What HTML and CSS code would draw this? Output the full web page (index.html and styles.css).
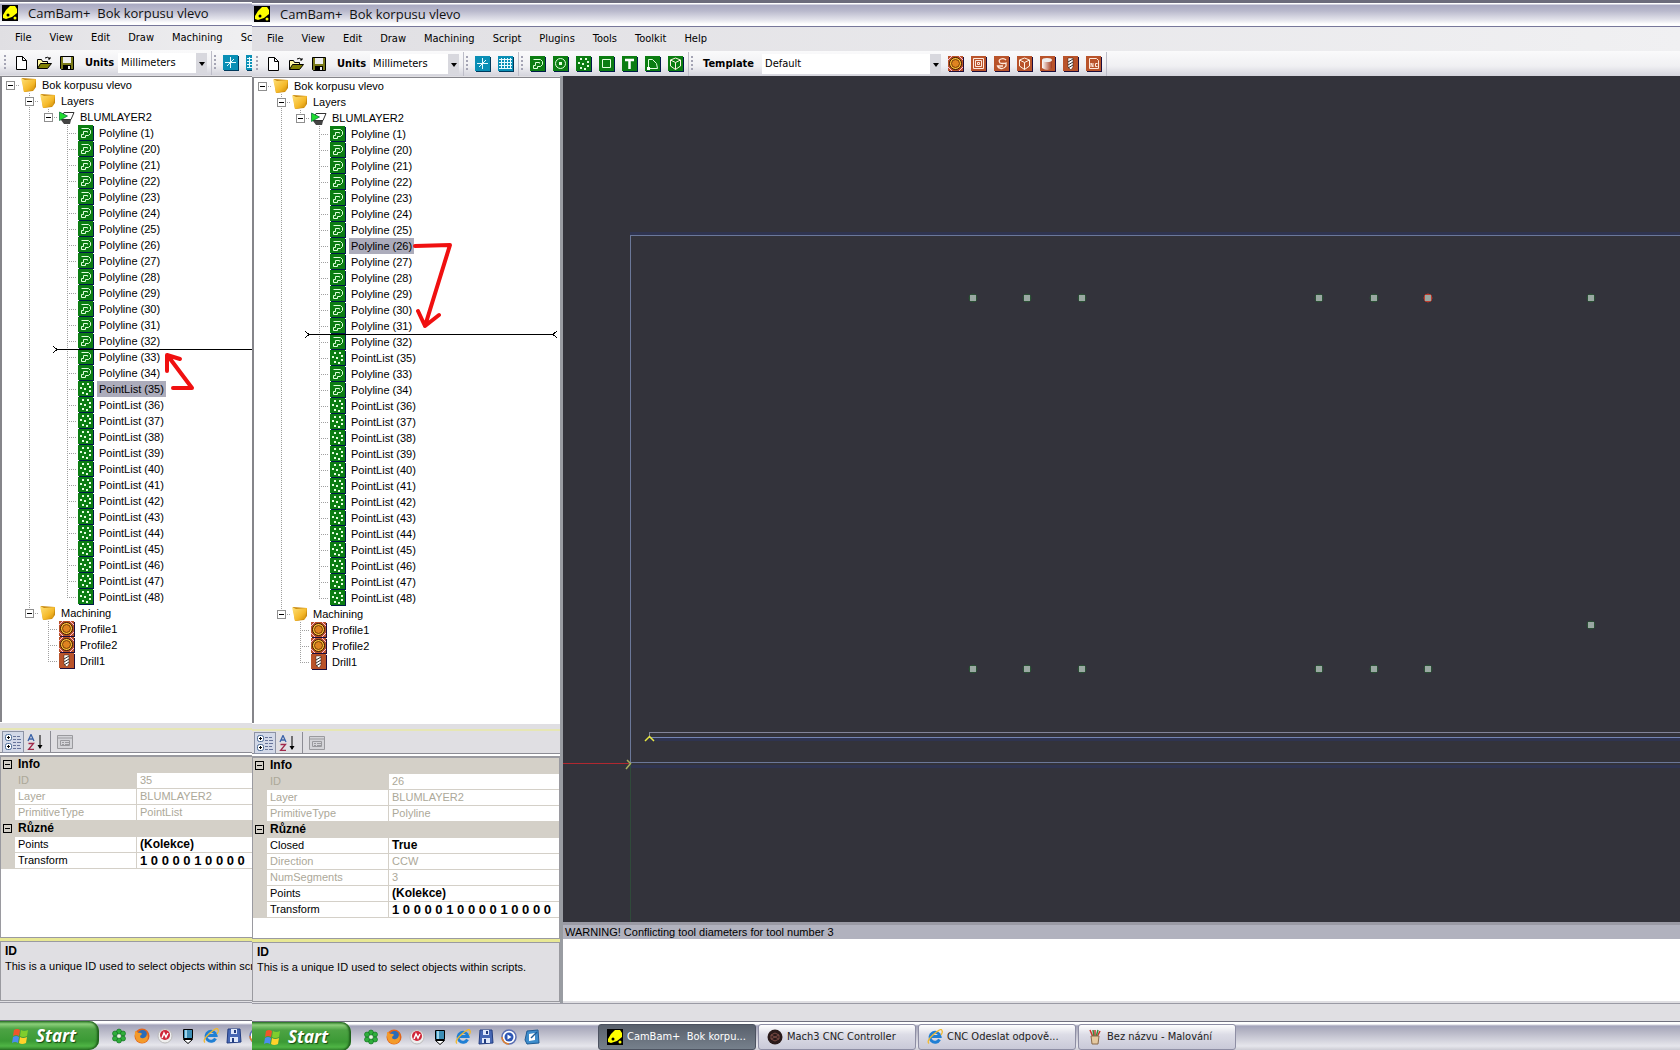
FILE: index.html
```html
<!DOCTYPE html>
<html lang="cs">
<head>
<meta charset="utf-8">
<title>CamBam+ Bok korpusu vlevo</title>
<link rel="stylesheet" href="styles.css">
</head>
<body>
<svg class="defs" aria-hidden="true">
  <defs>
    <linearGradient id="gold" x1="0" y1="0" x2="1" y2="1"><stop offset="0" stop-color="#ffe27a"/><stop offset=".6" stop-color="#f5b92a"/><stop offset="1" stop-color="#c98500"/></linearGradient>
    <linearGradient id="steel"><stop offset="0" stop-color="#fff"/><stop offset="1" stop-color="#a33a1a"/></linearGradient>
  </defs>
  <symbol id="app" viewBox="0 0 16 16"><path fill="#000" d="M0 0h16v16H0z"/><path fill="#ff0" d="M8 1h5l2 3v4l-5 4-6 2-3-1v-3l3-5z"/><circle cx="6" cy="10" r="1.5"/><circle cx="13" cy="13" r="1.5" fill="#ff0"/></symbol>
  <symbol id="folder" viewBox="0 0 16 16"><path fill="#c98a10" d="M1 1l14 1v8l-3 4-9 1z"/><path fill="url(#gold)" d="M0 1l4 2 11-1-2 11-10 2z"/></symbol>
  <symbol id="layer" viewBox="0 0 16 16"><path d="M5 3.500h10l-3 7H2z" fill="#fff" stroke="#333"/><path d="M2 11h10l-1 4H5z" fill="#444"/><path d="M.5 3l8 4-8 4.500z" fill="#1fdc2f" stroke="#063" stroke-width=".7"/></symbol>
  <symbol id="green" viewBox="0 0 16 16"><path fill="#001a4a" d="M1 1h15v15H1z"/><path fill="#0b7d12" d="M0 0h15v15H0z"/></symbol>
  <symbol id="brown" viewBox="0 0 16 16"><path fill="#1c0d3c" d="M1 1h15v15H1z"/><path fill="#b9532a" d="M0 0h15v15H0z"/></symbol>
  <symbol id="poly" viewBox="0 0 16 16"><use href="#green"/><path d="M3.500 3.500h7l2 2v3l-2 2h-3v2h-4v-3h2v-3h4v1" fill="none" stroke="#dfffdc"/></symbol>
  <symbol id="points" viewBox="0 0 16 16"><use href="#green"/><path fill="#e4ffe0" d="M4 2h2v2H4zM9 2h2v2H9zM2 6h2v2H2zM6 7h2v2H6zM11 5h2v2h-2zM11 9h2v2h-2zM4 11h2v2H4zM8 12h2v2H8z"/></symbol>
  <symbol id="circle" viewBox="0 0 16 16"><use href="#green"/><circle cx="7.500" cy="7.500" r="5" fill="none" stroke="#e4ffe0"/><path fill="#e4ffe0" d="M6 6h3v3H6z"/></symbol>
  <symbol id="rect" viewBox="0 0 16 16"><use href="#green"/><path d="M3.500 3.500h8v8h-8z" fill="none" stroke="#e4ffe0"/></symbol>
  <symbol id="text" viewBox="0 0 16 16"><use href="#green"/><path d="M3 4h9M7.500 4v9" stroke="#fff" stroke-width="2.500"/></symbol>
  <symbol id="surface" viewBox="0 0 16 16"><use href="#green"/><path d="M3.500 12.500v-9h4l4 4 1 5z" fill="none" stroke="#e4ffe0"/><path fill="#fff" d="M2 11h3v3H2z"/></symbol>
  <symbol id="cube" viewBox="0 0 16 16"><path d="M7.500 2l5 2v6l-5 3.500-5-3.500V4zM2.500 4l5 2.500 5-2.500M7.500 6.500v7" fill="none" stroke="#fff3e4"/></symbol>
  <symbol id="solid" viewBox="0 0 16 16"><use href="#green"/><use href="#cube"/></symbol>
  <symbol id="profile" viewBox="0 0 16 16"><use href="#brown"/><path d="M0 4l4-4M11 0l4 4M0 11l4 4M11 15l4-4" stroke="#fbd"/><circle cx="7.500" cy="7.500" r="6" fill="#ffc53a" stroke="#3a1500"/><circle cx="7.500" cy="7.500" r="4" fill="#de8420" stroke="#5a2800" stroke-width=".8"/></symbol>
  <symbol id="pocket" viewBox="0 0 16 16"><use href="#brown"/><path d="M2.500 2.500h10v10h-10zM4.500 4.500h6v6h-6zM6.500 6.500h2v2h-2z" fill="none" stroke="#ffe9dc"/></symbol>
  <symbol id="engrave" viewBox="0 0 16 16"><use href="#brown"/><path d="M12 4Q10 2 7 3T6 7q3 1 6 0v3q-2 3-5 2.500T3.500 10H9" fill="none" stroke="#ffe9dc" stroke-width="1.300"/></symbol>
  <symbol id="relief" viewBox="0 0 16 16"><use href="#brown"/><use href="#cube"/></symbol>
  <symbol id="lathe" viewBox="0 0 16 16"><use href="#brown"/><path d="M2 4v8q6 4 10 0V4z" fill="url(#steel)"/><ellipse cx="7" cy="4" rx="5" ry="2" fill="#eee"/></symbol>
  <symbol id="drill" viewBox="0 0 16 16"><use href="#brown"/><path d="M5 2h5v9l-2 3-3-3z" fill="#fff" stroke="#401500" stroke-width=".5"/><path d="M5 6l5-3M5 9l5-3M5 12l5-3" stroke="#333"/></symbol>
  <symbol id="ncfile" viewBox="0 0 16 16"><use href="#brown"/><path d="M3.500 2.500h7l2 2v8h-9zM5 11V7l2 4V7M11.500 7.500h-2v3h2" fill="none" stroke="#ffe9dc"/></symbol>
  <symbol id="new" viewBox="0 0 16 16"><path d="M3.500 1.500h6l4 4v9h-10zM9.500 1.500v4h4" fill="#fff" stroke="#000"/></symbol>
  <symbol id="open" viewBox="0 0 16 16"><path d="M1.500 13.500v-9h4l1 2h5v3" fill="#fff7a0" stroke="#000"/><path d="M1.500 13.500l3-5h11l-4 5z" fill="#808000" stroke="#000"/><path d="M9 3q3-2 5 1V2M14 4h-2" fill="none" stroke="#000"/></symbol>
  <symbol id="save" viewBox="0 0 16 16"><path d="M1.500 1.500h13v13h-12l-1-1z" fill="#7a7a18" stroke="#000"/><path fill="#eee" d="M4 2h8v6H4z"/><path d="M4 10h8v4H4z"/><path fill="#eee" d="M9 11h2v3H9z"/></symbol>
  <symbol id="axes" viewBox="0 0 16 16"><path fill="#003a5c" d="M1 1h15v15H1z"/><path fill="#0a8fb5" d="M0 0h15v15H0z"/><path d="M7.500 2v11M2 7.500h11M4 11l7-7" stroke="#e8fbff"/></symbol>
  <symbol id="grid" viewBox="0 0 16 16"><path fill="#003a5c" d="M1 1h15v15H1z"/><path fill="#0a8fb5" d="M0 0h15v15H0z"/><path d="M3.500 2v11M6.500 2v11M9.500 2v11M12.500 2v11M1 3.500h13M1 6.500h13M1 9.500h13M1 12.500h13" stroke="#e8fbff"/></symbol>
  <symbol id="categories" viewBox="0 0 16 16"><rect x=".5" y=".5" width="6" height="6" rx="2" fill="#fff" stroke="#4a6a95"/><rect x=".5" y="9.500" width="6" height="6" rx="2" fill="#fff" stroke="#4a6a95"/><path d="M2 3.500h3M3.500 2v3M2 12.500h3M3.500 11v3" stroke="#000"/><path d="M8 2.500h3M8 5.500h3M8 8.500h3M8 11.500h3M8 14.500h3M12 2.500h3M12 5.500h4M12 8.500h4M12 11.500h3M12 14.500h4" stroke="#67749a"/></symbol>
  <symbol id="sort" viewBox="0 0 16 16"><path d="M1 7l3-6.500L7 7M2 5h4" fill="none" stroke="#3b62a8" stroke-width="1.300"/><path d="M1.500 9.500h5l-5 6h5.500" fill="none" stroke="#a0284a" stroke-width="1.300"/><path d="M13 1v13" stroke="#000"/><path d="M10.500 11h5L13 15z"/></symbol>
  <symbol id="pages" viewBox="0 0 16 16"><path d="M.5 1.500h15v13H.5zM.5 4h15" fill="#d4d4d8" stroke="#9a9a9e"/><path d="M3.500 6.500h9v5h-9zM5 8.500h2M8 8.500h4M5 10.500h2M8 10.500h4" fill="none" stroke="#9a9a9e"/></symbol>
  <symbol id="flag" viewBox="0 0 18 18"><path fill="#f0562a" d="M3 3q3-2 6 0L8 9Q5 7 2 9z"/><path fill="#7fce2d" d="M10 3q3 2 7 0l-1 6q-4 2-7 0z"/><path fill="#4a8df0" d="M2 10q3-2 6 0l-1 6q-3-2-6 0z"/><path fill="#ffd22a" d="M9 10q3 2 7 0l-1 6q-4 2-7 0z"/></symbol>
  <symbol id="clover" viewBox="0 0 16 16"><g fill="#2fae3c" stroke="#0a6a1a" stroke-width=".6"><circle cx="8" cy="3.500" r="2.500"/><circle cx="12" cy="5.500" r="2.500"/><circle cx="12" cy="10.500" r="2.500"/><circle cx="8" cy="12.500" r="2.500"/><circle cx="4" cy="10.500" r="2.500"/><circle cx="4" cy="5.500" r="2.500"/></g><circle cx="8" cy="8" r="1.500" fill="#e8ffd8"/></symbol>
  <symbol id="firefox" viewBox="0 0 16 16"><circle cx="8" cy="8" r="7.500" fill="#e2641a"/><circle cx="8.500" cy="6.500" r="4.500" fill="#2b6cb8"/><path fill="#f39a2a" d="M1 3q2 0 3 2 3-1 4 1l-2 2q0 3 4 2 3-1 3-5 3 8-4 10Q0 15 1 3z"/></symbol>
  <symbol id="nero" viewBox="0 0 16 16"><circle cx="8" cy="8" r="7" fill="#eee" stroke="#bbb"/><circle cx="8" cy="7" r="5" fill="#cf2638"/><path d="M5 10l2-5 2 4 2-4" fill="none" stroke="#fff" stroke-width="1.500"/></symbol>
  <symbol id="pen" viewBox="0 0 16 16"><path d="M3.500 1.500h9v9h-9z" fill="#3c8db5" stroke="#000"/><path fill="#9fd4ea" d="M5 2h2v8H5z"/><path d="M3.500 11.500h9l-4.500 4z" fill="#fff" stroke="#000"/></symbol>
  <symbol id="ie" viewBox="0 0 16 16"><path d="M12.500 10.500a5 5 0 1 1 .5-3H4" fill="none" stroke="#1f7fd4" stroke-width="3"/><path d="M2 14.500Q-1 12 7 5t8-3q1 1-1 4" fill="none" stroke="#f2b92c" stroke-width="1.300"/></symbol>
  <symbol id="disk" viewBox="0 0 16 16"><path d="M2 1h12l1 13-14 1z" fill="#4667b4" stroke="#223c80"/><path fill="#dfe8fa" d="M5 1h6v5H5zM4 9h8v5H4z"/><path fill="#223c80" d="M8 2h2v3H8zM6 10h2v4H6z"/></symbol>
  <symbol id="media" viewBox="0 0 16 16"><circle cx="8" cy="8" r="7" fill="#fff" stroke="#5b6fb2" stroke-width="1.500"/><path d="M1 8a7 7 0 0 0 7 7" fill="none" stroke="#e08030" stroke-width="1.500"/><circle cx="8" cy="8" r="4.500" fill="#2d56b4"/><path fill="#fff" d="M6.500 5.500l4 2.500-4 2.500z"/></symbol>
  <symbol id="desk" viewBox="0 0 16 16"><path d="M3 2l11-1 1 13-12 1-2-4z" fill="#3d8ccb" stroke="#1d5a94"/><path d="M5 5l6-1v7l-6 1z" fill="#fff"/><path d="M7 9l6-6" stroke="#1d5a94" stroke-width="1.500"/></symbol>
  <symbol id="mach" viewBox="0 0 16 16"><circle cx="8" cy="8" r="7.500" fill="#2a1a1a"/><path d="M4 6l4-2 4 2v4l-4 2-4-2zM4 6l8 4M12 6l-8 4" fill="none" stroke="#7a4a44"/></symbol>
  <symbol id="paint" viewBox="0 0 16 16"><path d="M3 1l3 7M8 1v7M13 2l-3 6" stroke="#c8372b" stroke-width="1.500"/><path d="M6 1l1 7M11 1l-2 7" stroke="#3c8a3a" stroke-width="1.500"/><path d="M4 7h8l-1 8H5z" fill="#e5c9a0" stroke="#8a6a4a"/></symbol>
</svg>

<section class="screen">
  <header class="titlebar"><svg class="icon"><use href="#app"/></svg><h1>CamBam+  Bok korpusu vlevo</h1></header>
  <nav class="menu"><button>File</button><button>View</button><button>Edit</button><button>Draw</button><button>Machining</button><button>Script</button></nav>
  <div class="toolbar">
    <i class="grip"></i>
    <button aria-label="New"><svg class="icon"><use href="#new"/></svg></button>
    <button aria-label="Open"><svg class="icon"><use href="#open"/></svg></button>
    <button aria-label="Save"><svg class="icon"><use href="#save"/></svg></button>
    <label for="units-a">Units</label>
    <span class="combo units"><select id="units-a"><option>Millimeters</option></select></span>
    <i class="sep"></i><i class="grip"></i>
    <button aria-label="Axes"><svg class="icon"><use href="#axes"/></svg></button>
    <button aria-label="Grid"><svg class="icon"><use href="#grid"/></svg></button>
  </div>
  <main class="workspace">
    <aside class="side">
      <div class="tree">
        <ul>
          <li><div class="row"><span class="twig"><button aria-label="Collapse"></button></span><svg class="icon"><use href="#folder"/></svg><span class="name">Bok korpusu vlevo</span></div>
            <ul>
              <li><div class="row"><span class="twig"><button aria-label="Collapse"></button></span><svg class="icon"><use href="#folder"/></svg><span class="name">Layers</span></div>
                <ul>
                  <li><div class="row"><span class="twig"><button aria-label="Collapse"></button></span><svg class="icon"><use href="#layer"/></svg><span class="name">BLUMLAYER2</span></div>
                    <ul>
                      <li class="row"><span class="twig"></span><svg class="icon"><use href="#poly"/></svg><span class="name">Polyline (1)</span></li>
                      <li class="row"><span class="twig"></span><svg class="icon"><use href="#poly"/></svg><span class="name">Polyline (20)</span></li>
                      <li class="row"><span class="twig"></span><svg class="icon"><use href="#poly"/></svg><span class="name">Polyline (21)</span></li>
                      <li class="row"><span class="twig"></span><svg class="icon"><use href="#poly"/></svg><span class="name">Polyline (22)</span></li>
                      <li class="row"><span class="twig"></span><svg class="icon"><use href="#poly"/></svg><span class="name">Polyline (23)</span></li>
                      <li class="row"><span class="twig"></span><svg class="icon"><use href="#poly"/></svg><span class="name">Polyline (24)</span></li>
                      <li class="row"><span class="twig"></span><svg class="icon"><use href="#poly"/></svg><span class="name">Polyline (25)</span></li>
                      <li class="row"><span class="twig"></span><svg class="icon"><use href="#poly"/></svg><span class="name">Polyline (26)</span></li>
                      <li class="row"><span class="twig"></span><svg class="icon"><use href="#poly"/></svg><span class="name">Polyline (27)</span></li>
                      <li class="row"><span class="twig"></span><svg class="icon"><use href="#poly"/></svg><span class="name">Polyline (28)</span></li>
                      <li class="row"><span class="twig"></span><svg class="icon"><use href="#poly"/></svg><span class="name">Polyline (29)</span></li>
                      <li class="row"><span class="twig"></span><svg class="icon"><use href="#poly"/></svg><span class="name">Polyline (30)</span></li>
                      <li class="row"><span class="twig"></span><svg class="icon"><use href="#poly"/></svg><span class="name">Polyline (31)</span></li>
                      <li class="row"><span class="twig"></span><svg class="icon"><use href="#poly"/></svg><span class="name">Polyline (32)</span></li>
                      <li class="row"><span class="twig"></span><svg class="icon"><use href="#poly"/></svg><span class="name">Polyline (33)</span></li>
                      <li class="row"><span class="twig"></span><svg class="icon"><use href="#poly"/></svg><span class="name">Polyline (34)</span></li>
                      <li class="row"><span class="twig"></span><svg class="icon"><use href="#points"/></svg><span class="name selected">PointList (35)</span></li>
                      <li class="row"><span class="twig"></span><svg class="icon"><use href="#points"/></svg><span class="name">PointList (36)</span></li>
                      <li class="row"><span class="twig"></span><svg class="icon"><use href="#points"/></svg><span class="name">PointList (37)</span></li>
                      <li class="row"><span class="twig"></span><svg class="icon"><use href="#points"/></svg><span class="name">PointList (38)</span></li>
                      <li class="row"><span class="twig"></span><svg class="icon"><use href="#points"/></svg><span class="name">PointList (39)</span></li>
                      <li class="row"><span class="twig"></span><svg class="icon"><use href="#points"/></svg><span class="name">PointList (40)</span></li>
                      <li class="row"><span class="twig"></span><svg class="icon"><use href="#points"/></svg><span class="name">PointList (41)</span></li>
                      <li class="row"><span class="twig"></span><svg class="icon"><use href="#points"/></svg><span class="name">PointList (42)</span></li>
                      <li class="row"><span class="twig"></span><svg class="icon"><use href="#points"/></svg><span class="name">PointList (43)</span></li>
                      <li class="row"><span class="twig"></span><svg class="icon"><use href="#points"/></svg><span class="name">PointList (44)</span></li>
                      <li class="row"><span class="twig"></span><svg class="icon"><use href="#points"/></svg><span class="name">PointList (45)</span></li>
                      <li class="row"><span class="twig"></span><svg class="icon"><use href="#points"/></svg><span class="name">PointList (46)</span></li>
                      <li class="row"><span class="twig"></span><svg class="icon"><use href="#points"/></svg><span class="name">PointList (47)</span></li>
                      <li class="row"><span class="twig"></span><svg class="icon"><use href="#points"/></svg><span class="name">PointList (48)</span></li>
                    </ul>
                  </li>
                </ul>
              </li>
              <li><div class="row"><span class="twig"><button aria-label="Collapse"></button></span><svg class="icon"><use href="#folder"/></svg><span class="name">Machining</span></div>
                <ul>
                  <li class="row"><span class="twig"></span><svg class="icon"><use href="#profile"/></svg><span class="name">Profile1</span></li>
                  <li class="row"><span class="twig"></span><svg class="icon"><use href="#profile"/></svg><span class="name">Profile2</span></li>
                  <li class="row"><span class="twig"></span><svg class="icon"><use href="#drill"/></svg><span class="name">Drill1</span></li>
                </ul>
              </li>
            </ul>
          </li>
        </ul>
        <svg class="marks"><path class="drop" d="M51 269l4 3.500-4 3.500M55 272.500h244l4-3.500M299 272.500l4 3.500"/><path class="pen" d="M171 311h19l-24-32M165 294v-16l13 4"/></svg>
      </div>
      <div class="splitter"></div>
      <div class="propbar"><button class="on" aria-label="Categorized"><svg class="icon"><use href="#categories"/></svg></button><button aria-label="Alphabetical"><svg class="icon"><use href="#sort"/></svg></button><i class="sep"></i><button aria-label="Property pages"><svg class="icon"><use href="#pages"/></svg></button></div>
      <div class="props">
        <table>
          <colgroup><col class="c-gutter"><col class="c-key"><col></colgroup>
          <tr class="cat"><td><button aria-label="Collapse"></button></td><th colspan="2">Info</th></tr>
          <tr class="ro current"><td></td><td>ID</td><td>35</td></tr>
          <tr class="ro"><td></td><td>Layer</td><td>BLUMLAYER2</td></tr>
          <tr class="ro"><td></td><td>PrimitiveType</td><td>PointList</td></tr>
          <tr class="cat"><td><button aria-label="Collapse"></button></td><th colspan="2">Různé</th></tr>
          <tr><td></td><td>Points</td><td class="strong">(Kolekce)</td></tr>
          <tr><td></td><td>Transform</td><td class="matrix">1 0 0 0 0 1 0 0 0 0</td></tr>
        </table>
      </div>
      <div class="splitter thin"></div>
      <div class="help"><h2>ID</h2><p>This is a unique ID used to select objects within scripts.</p></div>
    </aside>
  </main>
  <div class="status"></div>
  <footer class="taskbar">
    <button class="start"><svg class="flag"><use href="#flag"/></svg>Start</button>
    <div class="quick">
      <button aria-label="ICQ"><svg class="icon"><use href="#clover"/></svg></button>
      <button aria-label="Firefox"><svg class="icon"><use href="#firefox"/></svg></button>
      <button aria-label="Nero"><svg class="icon"><use href="#nero"/></svg></button>
      <button aria-label="Pen"><svg class="icon"><use href="#pen"/></svg></button>
      <button aria-label="Internet Explorer"><svg class="icon"><use href="#ie"/></svg></button>
      <button aria-label="Commander"><svg class="icon"><use href="#disk"/></svg></button>
      <button aria-label="Media Player"><svg class="icon"><use href="#media"/></svg></button>
    </div>
  </footer>
</section>

<section class="screen front">
  <header class="titlebar"><svg class="icon"><use href="#app"/></svg><h1>CamBam+  Bok korpusu vlevo</h1></header>
  <nav class="menu"><button>File</button><button>View</button><button>Edit</button><button>Draw</button><button>Machining</button><button>Script</button><button>Plugins</button><button>Tools</button><button>Toolkit</button><button>Help</button></nav>
  <div class="toolbar">
    <i class="grip"></i>
    <button aria-label="New"><svg class="icon"><use href="#new"/></svg></button>
    <button aria-label="Open"><svg class="icon"><use href="#open"/></svg></button>
    <button aria-label="Save"><svg class="icon"><use href="#save"/></svg></button>
    <label for="units-b">Units</label>
    <span class="combo units"><select id="units-b"><option>Millimeters</option></select></span>
    <i class="sep"></i><i class="grip"></i>
    <button aria-label="Axes"><svg class="icon"><use href="#axes"/></svg></button>
    <button aria-label="Grid"><svg class="icon"><use href="#grid"/></svg></button>
    <i class="sep"></i><i class="grip"></i>
    <button aria-label="Polyline"><svg class="icon"><use href="#poly"/></svg></button>
    <button aria-label="Circle"><svg class="icon"><use href="#circle"/></svg></button>
    <button aria-label="Point list"><svg class="icon"><use href="#points"/></svg></button>
    <button aria-label="Rectangle"><svg class="icon"><use href="#rect"/></svg></button>
    <button aria-label="Text"><svg class="icon"><use href="#text"/></svg></button>
    <button aria-label="Surface"><svg class="icon"><use href="#surface"/></svg></button>
    <button aria-label="Solid"><svg class="icon"><use href="#solid"/></svg></button>
    <i class="sep"></i><i class="grip"></i>
    <label for="template">Template</label>
    <span class="combo template"><select id="template"><option>Default</option></select></span>
    <button aria-label="Profile"><svg class="icon"><use href="#profile"/></svg></button>
    <button aria-label="Pocket"><svg class="icon"><use href="#pocket"/></svg></button>
    <button aria-label="Engrave"><svg class="icon"><use href="#engrave"/></svg></button>
    <button aria-label="3D surface"><svg class="icon"><use href="#relief"/></svg></button>
    <button aria-label="Lathe"><svg class="icon"><use href="#lathe"/></svg></button>
    <button aria-label="Drill"><svg class="icon"><use href="#drill"/></svg></button>
    <button aria-label="NC file"><svg class="icon"><use href="#ncfile"/></svg></button>
    <i class="sep"></i>
  </div>
  <main class="workspace">
    <aside class="side">
      <div class="tree">
        <ul>
          <li><div class="row"><span class="twig"><button aria-label="Collapse"></button></span><svg class="icon"><use href="#folder"/></svg><span class="name">Bok korpusu vlevo</span></div>
            <ul>
              <li><div class="row"><span class="twig"><button aria-label="Collapse"></button></span><svg class="icon"><use href="#folder"/></svg><span class="name">Layers</span></div>
                <ul>
                  <li><div class="row"><span class="twig"><button aria-label="Collapse"></button></span><svg class="icon"><use href="#layer"/></svg><span class="name">BLUMLAYER2</span></div>
                    <ul>
                      <li class="row"><span class="twig"></span><svg class="icon"><use href="#poly"/></svg><span class="name">Polyline (1)</span></li>
                      <li class="row"><span class="twig"></span><svg class="icon"><use href="#poly"/></svg><span class="name">Polyline (20)</span></li>
                      <li class="row"><span class="twig"></span><svg class="icon"><use href="#poly"/></svg><span class="name">Polyline (21)</span></li>
                      <li class="row"><span class="twig"></span><svg class="icon"><use href="#poly"/></svg><span class="name">Polyline (22)</span></li>
                      <li class="row"><span class="twig"></span><svg class="icon"><use href="#poly"/></svg><span class="name">Polyline (23)</span></li>
                      <li class="row"><span class="twig"></span><svg class="icon"><use href="#poly"/></svg><span class="name">Polyline (24)</span></li>
                      <li class="row"><span class="twig"></span><svg class="icon"><use href="#poly"/></svg><span class="name">Polyline (25)</span></li>
                      <li class="row"><span class="twig"></span><svg class="icon"><use href="#poly"/></svg><span class="name selected">Polyline (26)</span></li>
                      <li class="row"><span class="twig"></span><svg class="icon"><use href="#poly"/></svg><span class="name">Polyline (27)</span></li>
                      <li class="row"><span class="twig"></span><svg class="icon"><use href="#poly"/></svg><span class="name">Polyline (28)</span></li>
                      <li class="row"><span class="twig"></span><svg class="icon"><use href="#poly"/></svg><span class="name">Polyline (29)</span></li>
                      <li class="row"><span class="twig"></span><svg class="icon"><use href="#poly"/></svg><span class="name">Polyline (30)</span></li>
                      <li class="row"><span class="twig"></span><svg class="icon"><use href="#poly"/></svg><span class="name">Polyline (31)</span></li>
                      <li class="row"><span class="twig"></span><svg class="icon"><use href="#poly"/></svg><span class="name">Polyline (32)</span></li>
                      <li class="row"><span class="twig"></span><svg class="icon"><use href="#points"/></svg><span class="name">PointList (35)</span></li>
                      <li class="row"><span class="twig"></span><svg class="icon"><use href="#poly"/></svg><span class="name">Polyline (33)</span></li>
                      <li class="row"><span class="twig"></span><svg class="icon"><use href="#poly"/></svg><span class="name">Polyline (34)</span></li>
                      <li class="row"><span class="twig"></span><svg class="icon"><use href="#points"/></svg><span class="name">PointList (36)</span></li>
                      <li class="row"><span class="twig"></span><svg class="icon"><use href="#points"/></svg><span class="name">PointList (37)</span></li>
                      <li class="row"><span class="twig"></span><svg class="icon"><use href="#points"/></svg><span class="name">PointList (38)</span></li>
                      <li class="row"><span class="twig"></span><svg class="icon"><use href="#points"/></svg><span class="name">PointList (39)</span></li>
                      <li class="row"><span class="twig"></span><svg class="icon"><use href="#points"/></svg><span class="name">PointList (40)</span></li>
                      <li class="row"><span class="twig"></span><svg class="icon"><use href="#points"/></svg><span class="name">PointList (41)</span></li>
                      <li class="row"><span class="twig"></span><svg class="icon"><use href="#points"/></svg><span class="name">PointList (42)</span></li>
                      <li class="row"><span class="twig"></span><svg class="icon"><use href="#points"/></svg><span class="name">PointList (43)</span></li>
                      <li class="row"><span class="twig"></span><svg class="icon"><use href="#points"/></svg><span class="name">PointList (44)</span></li>
                      <li class="row"><span class="twig"></span><svg class="icon"><use href="#points"/></svg><span class="name">PointList (45)</span></li>
                      <li class="row"><span class="twig"></span><svg class="icon"><use href="#points"/></svg><span class="name">PointList (46)</span></li>
                      <li class="row"><span class="twig"></span><svg class="icon"><use href="#points"/></svg><span class="name">PointList (47)</span></li>
                      <li class="row"><span class="twig"></span><svg class="icon"><use href="#points"/></svg><span class="name">PointList (48)</span></li>
                    </ul>
                  </li>
                </ul>
              </li>
              <li><div class="row"><span class="twig"><button aria-label="Collapse"></button></span><svg class="icon"><use href="#folder"/></svg><span class="name">Machining</span></div>
                <ul>
                  <li class="row"><span class="twig"></span><svg class="icon"><use href="#profile"/></svg><span class="name">Profile1</span></li>
                  <li class="row"><span class="twig"></span><svg class="icon"><use href="#profile"/></svg><span class="name">Profile2</span></li>
                  <li class="row"><span class="twig"></span><svg class="icon"><use href="#drill"/></svg><span class="name">Drill1</span></li>
                </ul>
              </li>
            </ul>
          </li>
        </ul>
        <svg class="marks"><path class="drop" d="M51 253l4 3.500-4 3.500M55 256.500h244l4-3.500M299 256.500l4 3.500"/><path class="pen" d="M161 168l35-1-25 81M164 233l7 15 14-11"/></svg>
      </div>
      <div class="splitter"></div>
      <div class="propbar"><button class="on" aria-label="Categorized"><svg class="icon"><use href="#categories"/></svg></button><button aria-label="Alphabetical"><svg class="icon"><use href="#sort"/></svg></button><i class="sep"></i><button aria-label="Property pages"><svg class="icon"><use href="#pages"/></svg></button></div>
      <div class="props">
        <table>
          <colgroup><col class="c-gutter"><col class="c-key"><col></colgroup>
          <tr class="cat"><td><button aria-label="Collapse"></button></td><th colspan="2">Info</th></tr>
          <tr class="ro current"><td></td><td>ID</td><td>26</td></tr>
          <tr class="ro"><td></td><td>Layer</td><td>BLUMLAYER2</td></tr>
          <tr class="ro"><td></td><td>PrimitiveType</td><td>Polyline</td></tr>
          <tr class="cat"><td><button aria-label="Collapse"></button></td><th colspan="2">Různé</th></tr>
          <tr><td></td><td>Closed</td><td class="strong">True</td></tr>
          <tr class="ro"><td></td><td>Direction</td><td>CCW</td></tr>
          <tr class="ro"><td></td><td>NumSegments</td><td>3</td></tr>
          <tr><td></td><td>Points</td><td class="strong">(Kolekce)</td></tr>
          <tr><td></td><td>Transform</td><td class="matrix">1 0 0 0 0 1 0 0 0 0 1 0 0 0 0</td></tr>
        </table>
      </div>
      <div class="splitter thin"></div>
      <div class="help"><h2>ID</h2><p>This is a unique ID used to select objects within scripts.</p></div>
    </aside>
    <div class="view">
      <svg class="canvas">
        <g fill="none" shape-rendering="crispEdges">
          <path stroke="#2f3450" stroke-width="3" d="M67 157.500h3000M68 690.500h3000M86 663.500h3000"/>
          <path stroke="#6b7899" d="M67.500 159v528M67 159.500h3000M67 686.500h3000"/>
          <path stroke="#82849a" d="M86.500 661v-5H3000"/>
          <path stroke="#7484b4" d="M86 661.500h3000"/>
          <path stroke="#b02830" d="M0 687.500h66"/>
          <path stroke="#2f4a3a" d="M67.500 688v400"/>
        </g>
        <path fill="none" stroke="#e8e840" stroke-width="1.500" d="M82 665l4.500-4.500L91 665"/>
        <path fill="none" stroke="#a8b060" stroke-width="1.500" d="M64 684l3.500 3.500L63 693"/>
        <g class="points">
          <circle cx="410" cy="222" r="4"/><circle cx="464" cy="222" r="4"/><circle cx="519" cy="222" r="4"/><circle cx="756" cy="222" r="4"/><circle cx="811" cy="222" r="4"/><circle class="hit" cx="865" cy="222" r="4"/><circle cx="1028" cy="222" r="4"/>
          <circle cx="1028" cy="549" r="4"/>
          <circle cx="410" cy="593" r="4"/><circle cx="464" cy="593" r="4"/><circle cx="519" cy="593" r="4"/><circle cx="756" cy="593" r="4"/><circle cx="811" cy="593" r="4"/><circle cx="865" cy="593" r="4"/>
        </g>
        <path fill="#9aa8a2" d="M407 219h6v6h-6zM461 219h6v6h-6zM516 219h6v6h-6zM753 219h6v6h-6zM808 219h6v6h-6zM862 219h6v6h-6zM1025 219h6v6h-6zM1025 546h6v6h-6zM407 590h6v6h-6zM461 590h6v6h-6zM516 590h6v6h-6zM753 590h6v6h-6zM808 590h6v6h-6zM862 590h6v6h-6z"/>
      </svg>
      <div class="log"><p>WARNING! Conflicting tool diameters for tool number 3</p></div>
    </div>
  </main>
  <div class="status"></div>
  <footer class="taskbar">
    <button class="start"><svg class="flag"><use href="#flag"/></svg>Start</button>
    <div class="quick">
      <button aria-label="ICQ"><svg class="icon"><use href="#clover"/></svg></button>
      <button aria-label="Firefox"><svg class="icon"><use href="#firefox"/></svg></button>
      <button aria-label="Nero"><svg class="icon"><use href="#nero"/></svg></button>
      <button aria-label="Pen"><svg class="icon"><use href="#pen"/></svg></button>
      <button aria-label="Internet Explorer"><svg class="icon"><use href="#ie"/></svg></button>
      <button aria-label="Commander"><svg class="icon"><use href="#disk"/></svg></button>
      <button aria-label="Media Player"><svg class="icon"><use href="#media"/></svg></button>
      <button aria-label="Desktop"><svg class="icon"><use href="#desk"/></svg></button>
    </div>
    <div class="tasks">
      <button class="active"><svg class="icon"><use href="#app"/></svg>CamBam+  Bok korpu...</button>
      <button><svg class="icon"><use href="#mach"/></svg>Mach3 CNC Controller</button>
      <button><svg class="icon"><use href="#ie"/></svg>CNC Odeslat odpově...</button>
      <button><svg class="icon"><use href="#paint"/></svg>Bez názvu - Malování</button>
    </div>
  </footer>
</section>
</body>
</html>
```
FILE: styles.css
```css
* { box-sizing: border-box; }

body {
  margin: 0;
  height: 100vh;
  overflow: hidden;
  display: grid;
  grid-template-columns: 252px minmax(0, 1fr);
  background: #6c6c7c;
  font: 11px/16px "Liberation Sans", sans-serif;
  color: #000;
}

button {
  border: 0;
  padding: 0;
  background: none;
  font: inherit;
  color: inherit;
  white-space: pre;
}

ul, h1, h2, p { margin: 0; padding: 0; list-style: none; }
.defs { position: absolute; width: 0; height: 0; }
.icon { width: 16px; height: 16px; flex: none; display: block; }

.screen {
  display: flex;
  flex-direction: column;
  height: 100vh;
  overflow: hidden;
  background: #e0dfe3;
}
.front { margin-top: 1px; }

/* Title, menu and toolbar */
.titlebar {
  flex: none;
  display: flex;
  align-items: center;
  gap: 10px;
  height: 26px;
  padding: 0 0 2px 2px;
  border-top: 2px solid #6c6c7c;
  border-bottom: 1px solid #77779a;
  background: linear-gradient(#fff 0 1px, #a9a9c2 2px, #b9b9cc 8px, #e4e4ec 17px, #fff 21px);
}
.titlebar h1 {
  font: 500 13px/20px "Open Sans", sans-serif;
  white-space: pre;
  color: #111;
}
.menu {
  flex: none;
  display: flex;
  gap: 18px;
  height: 24px;
  padding-left: 15px;
  background: linear-gradient(90deg, #e0dfe3, #f0f0f2);
  font: 11px/24px "DejaVu Sans Condensed", sans-serif;
}
.toolbar {
  flex: none;
  display: flex;
  align-items: center;
  gap: 7px;
  height: 25px;
  padding-left: 4px;
  background: linear-gradient(#fafafb, #f0f0f3 60%, #d4d4dc);
  font: 11px/20px "DejaVu Sans Condensed", sans-serif;
}
.toolbar label { font-weight: bold; margin: 0 -3px 0 3px; }
.toolbar > * { flex: none; }
.grip {
  width: 2px;
  height: 16px;
  background: repeating-linear-gradient(#a4a4b4 0 2px, transparent 2px 4px);
}
.sep { width: 1px; height: 24px; margin: 0 -5px 0 -3px; background: #bdbdc8; }
.combo { position: relative; }
.combo::after {
  content: "";
  position: absolute;
  right: 2px;
  top: 9px;
  border: 3px solid transparent;
  border-top: 4px solid #000;
  border-bottom: 0;
  pointer-events: none;
}
.combo select {
  display: block;
  width: 100%;
  height: 20px;
  padding: 0 14px 0 3px;
  border: 0;
  border-radius: 0;
  appearance: none;
  background: linear-gradient(90deg, #d8d8de, #d8d8de) right / 11px 100% no-repeat #fff;
  font: inherit;
}
.units { width: 89px; }
.template { width: 179px; margin-left: 4px; }

/* Work area */
.workspace { flex: 1; min-height: 0; display: flex; }
.side {
  flex: none;
  display: flex;
  flex-direction: column;
  width: 308px;
  padding: 1px 0;
}
.tree {
  position: relative;
  flex: 1;
  min-height: 0;
  overflow: hidden;
  border-top: 1px solid #85858a;
  border-left: 2px solid #85858a;
  background: #fff;
}
.tree ul ul { padding-left: 19px; }
.tree > ul { margin-left: -2px; }
.tree ul ul > li {
  background: repeating-linear-gradient(#a0a0a0 0 1px, transparent 1px 2px) 10px 0 / 1px 100% no-repeat;
}
.tree ul ul > li:last-child { background-size: 1px 8px; }
.row { display: flex; align-items: center; height: 16px; }
.twig {
  flex: none;
  width: 21px;
  padding-left: 6px;
  background: repeating-linear-gradient(90deg, #a0a0a0 0 1px, transparent 1px 2px) 10px 4px / 10px 1px no-repeat;
}
.twig:empty { height: 9px; }
.twig button {
  display: block;
  width: 9px;
  height: 9px;
  border: 1px solid #8f8f8f;
  background: linear-gradient(#000, #000) center / 5px 1px no-repeat #fff;
}
.name { margin-left: 3px; padding: 0 2px; white-space: nowrap; }
.selected { background: #acacbb; }
.marks {
  position: absolute;
  inset: 0;
  width: 100%;
  height: 100%;
  fill: none;
}
.drop { stroke: #000; shape-rendering: crispEdges; }
.pen { stroke: #f01010; stroke-width: 4; stroke-linecap: round; stroke-linejoin: round; }

.splitter {
  flex: none;
  height: 8px;
  border-top: 1px solid #fff;
  border-bottom: 2px solid #e6e6b4;
}
.splitter.thin { height: 3px; border: 0; background: #e8e895; }
.propbar {
  flex: none;
  display: flex;
  align-items: center;
  height: 25px;
  padding-left: 2px;
  border-bottom: 2px solid #fff;
  box-shadow: inset 0 -1px #8c8c94;
}
.propbar button { width: 22px; height: 22px; padding-left: 3px; }
.propbar .on { background: #d3d9e8; border: 1px solid #8d93a5; padding-left: 2px; }
.propbar .sep { height: 22px; margin: 0 3px 0 4px; background: #8c8c94; }
.props {
  flex: none;
  height: 183px;
  overflow: hidden;
  border: 1px solid #9a9aa0;
  border-top-width: 2px;
  background: #fff;
}
.props table { width: 100%; table-layout: fixed; border-spacing: 0; }
.c-gutter { width: 14px; }
.c-key { width: 122px; }
.props tr { height: 16px; }
.props td, .props th {
  height: 16px;
  padding: 0 0 0 3px;
  border-bottom: 1px solid #d4d0c8;
  font-weight: normal;
  line-height: 15px;
  text-align: left;
  white-space: nowrap;
  overflow: hidden;
}
.props td:first-child, .props .cat > *, .props .current td:nth-child(2) { background: #d4d0c8; }
.props td:nth-child(2) { border-right: 1px solid #d4d0c8; }
.props th, .props td.strong { font-weight: bold; font-size: 12px; }
.props td.matrix { font-weight: bold; font-size: 13px; }
.props .ro td { color: #aca899; }
.props td button {
  display: block;
  width: 9px;
  height: 9px;
  border: 1px solid #000;
  background: linear-gradient(#000, #000) center / 5px 1px no-repeat;
}
.props td:first-child { padding-left: 2px; }
.help {
  flex: none;
  height: 60px;
  padding: 1px 4px;
  border: 1px solid #9a9aa0;
  line-height: 15px;
  white-space: nowrap;
}
.help h2 { font-size: 12px; line-height: 16px; }

.view {
  flex: 1;
  min-width: 0;
  display: flex;
  flex-direction: column;
  border-left: 3px solid #999ca2;
}
.canvas { flex: 1; min-height: 0; width: 100%; background: #33333b; }
.points circle { fill: #27492f; stroke: #2b5236; stroke-width: 1; }
.points .hit { fill: #c0492c; stroke: #c0392c; }
.log {
  flex: none;
  height: 81px;
  border-top: 3px solid #9a9aa4;
  border-bottom: 2px solid #e0dfe3;
  background: #fff;
}
.log p { background: #b1b2be; padding-left: 2px; line-height: 14px; }

.status { flex: none; height: 18px; border-top: 1px solid #9a9aa4; }

/* Taskbar */
.taskbar {
  flex: none;
  display: flex;
  height: 30px;
  border-top: 1px solid #70707e;
  background: linear-gradient(#fff 0 2px, #a3a3ba 4px, #b4b4c4 9px, #e6e6ec 24px, #c6c6cf);
}
.start {
  flex: none;
  display: flex;
  align-items: center;
  gap: 7px;
  width: 99px;
  padding-left: 11px;
  border-radius: 0 10px 10px 0;
  background: linear-gradient(#2f7a2a, #8ccf7a 3px, #4da344 8px, #3b9a35 20px, #4fb545 25px, #2c7a28);
  box-shadow: inset -2px 0 2px #1f5f1c;
  color: #fff;
  font: italic bold 17px/28px "Open Sans", sans-serif;
  text-shadow: 1px 1px 1px #164a14;
}
.flag { width: 18px; height: 18px; }
.quick { flex: none; display: flex; align-items: center; gap: 7px; width: 247px; padding-left: 12px; }
.tasks { flex: 1; min-width: 0; display: flex; gap: 2px; padding-top: 2px; }
.tasks button {
  display: flex;
  align-items: center;
  gap: 4px;
  width: 158px;
  height: 26px;
  padding-left: 8px;
  border: 1px solid #8e8ea4;
  border-radius: 3px;
  background: linear-gradient(#fff, #dcdce6 40%, #c9c9d8);
  color: #222;
  font: 11px/22px "DejaVu Sans Condensed", sans-serif;
}
.tasks .active { background: linear-gradient(#59606c, #76808c); border-color: #4c5260; color: #fff; }
```
